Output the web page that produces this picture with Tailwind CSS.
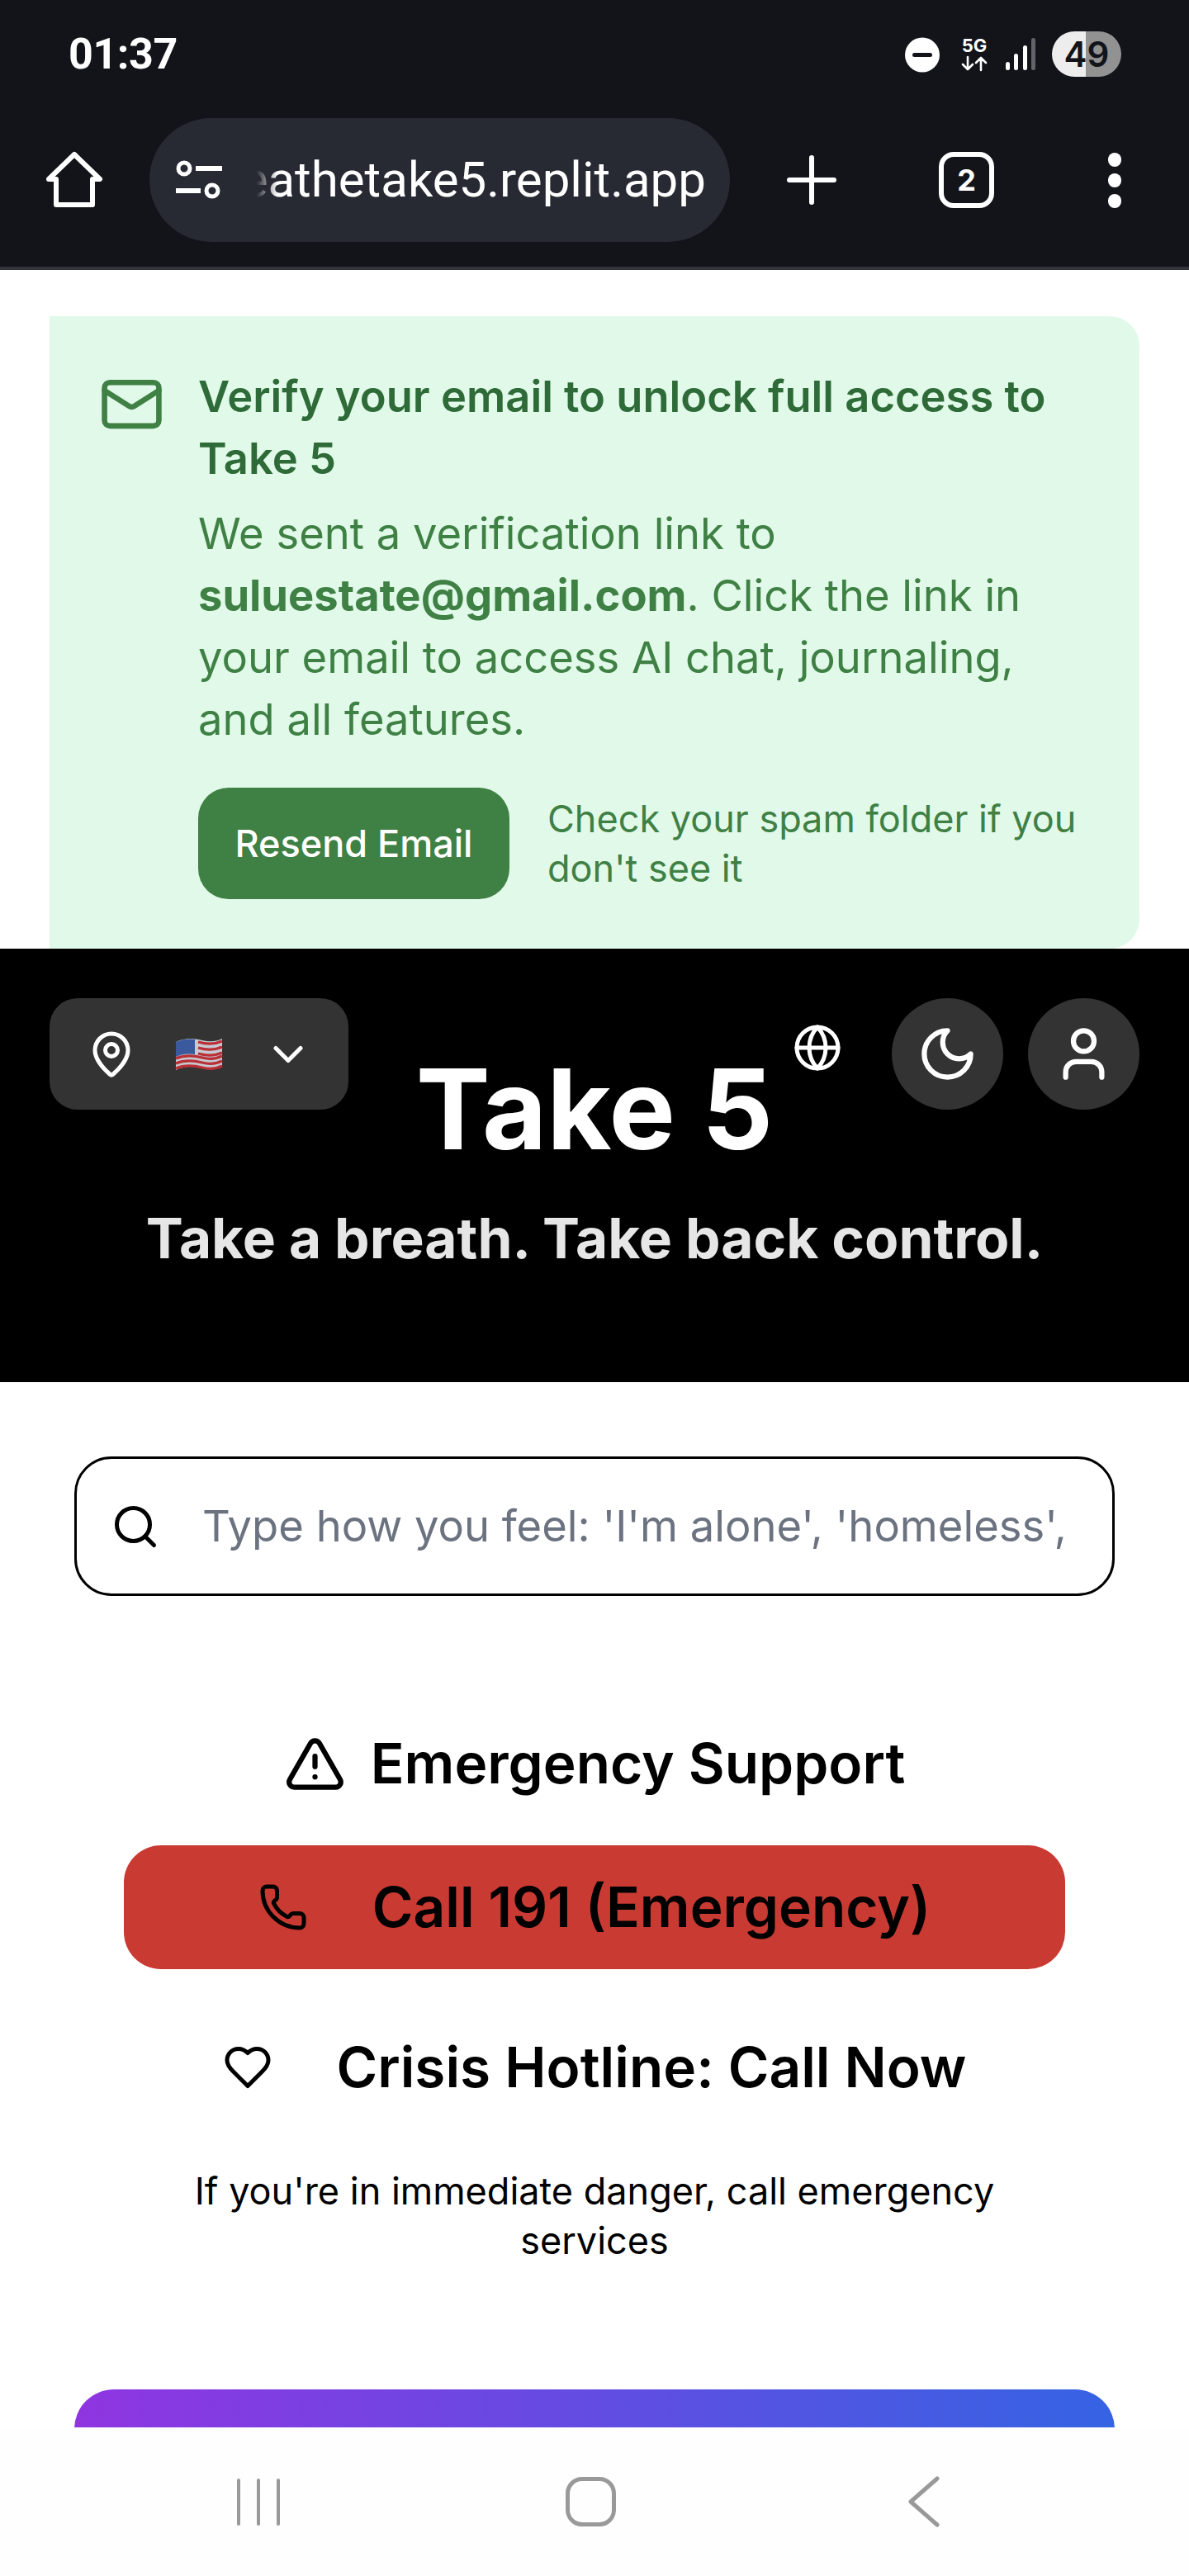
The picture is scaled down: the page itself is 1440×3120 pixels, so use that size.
<!DOCTYPE html>
<html lang="en">
<head>
  <meta charset="UTF-8" />
  <title>Take 5</title>
  <script src="https://cdn.jsdelivr.net/npm/@tailwindcss/browser@4"></script>
</head>
<body class="bg-white font-['Inter',sans-serif]">
<div class="w-[1440px] h-[3120px] flex flex-col overflow-hidden">

  <!-- status bar + browser toolbar -->
  <div class="h-[327px] shrink-0 bg-[#12141a] border-b-4 border-[#33343b] text-white flex flex-col">
    <div class="h-[143px] flex pt-[38px] pl-[83px] pr-[82px] justify-between items-start">
      <span class="font-['Roboto',sans-serif] font-bold text-[52px] leading-[55px] tracking-[-0.4px]">01:37</span>
      <div class="flex items-start">
        <svg class="mt-[7px]" width="42" height="43" viewBox="0 0 42 43"><circle cx="21" cy="21.5" r="21" fill="#fff"/><rect x="9" y="19" width="24" height="5" rx="2.5" fill="#12141a"/></svg>
        <div class="ml-[26px] mt-[6px] w-[32px] flex flex-col items-center">
          <span class="font-bold text-[22px] leading-[22px]">5G</span>
          <svg class="mt-[1px]" width="32" height="20" viewBox="0 0 32 20" fill="none" stroke="#fff" stroke-width="2.6" stroke-linecap="round" stroke-linejoin="round"><path d="M8 2v15M2 11l6 6 6-6M24 18V3M18 9l6-6 6 6"/></svg>
        </div>
        <div class="ml-[22px] mt-[7px] h-[40px] w-[36px] flex items-end justify-between">
          <span class="w-[5px] h-[10px] rounded-full bg-white"></span>
          <span class="w-[5px] h-[20px] rounded-full bg-white"></span>
          <span class="w-[5px] h-[30px] rounded-full bg-white"></span>
          <span class="w-[5px] h-[39px] rounded-full bg-[#63646a]"></span>
        </div>
        <div class="ml-[20px] w-[84px] h-[55px] rounded-full overflow-hidden bg-[linear-gradient(to_right,#ededed_49%,#929292_49%)] flex items-center justify-center text-[#12141a] font-semibold text-[42px] leading-none">49</div>
      </div>
    </div>
    <div class="flex items-start">
      <svg class="ml-[55px] mt-[40px]" width="70" height="69" viewBox="0 0 70 69" fill="none" stroke="#fff" stroke-width="6" stroke-linejoin="round" stroke-linecap="round"><path d="M35 4 66 34H57V65H13V34H4Z"/></svg>
      <div class="relative ml-[56px] w-[703px] h-[150px] rounded-[75px] bg-[#272a33] flex items-center overflow-hidden">
        <svg class="ml-[32px] shrink-0" width="56" height="48" viewBox="0 0 56 48" fill="none" stroke="#fff" stroke-width="5"><circle cx="10" cy="10" r="7"/><circle cx="44" cy="37" r="7"/><path d="M24 10h32M0 37h30" stroke-width="6"/></svg>
        <div class="relative ml-[31px] w-[555px] overflow-hidden flex justify-end">
          <span class="font-['Roboto',sans-serif] text-[60px] leading-[74px] whitespace-nowrap">breathetake5.replit.app</span>
          <span class="absolute left-0 top-0 w-[36px] h-full bg-gradient-to-r from-[#272a33] from-[30%] to-transparent"></span>
        </div>
      </div>
      <svg class="ml-[69px] mt-[45px]" width="60" height="60" viewBox="0 0 60 60" stroke="#fff" stroke-width="6" stroke-linecap="round"><path d="M30 3v54M3 30h54"/></svg>
      <div class="ml-[124px] mt-[41px] w-[67px] h-[68px] rounded-[18px] border-[6px] border-white flex items-center justify-center font-bold text-[36px] leading-none">2</div>
      <div class="ml-[138px] mt-[42px] flex flex-col gap-[8px]">
        <span class="w-[16px] h-[17px] rounded-full bg-white"></span>
        <span class="w-[16px] h-[17px] rounded-full bg-white"></span>
        <span class="w-[16px] h-[17px] rounded-full bg-white"></span>
      </div>
    </div>
  </div>

  <div class="flex-1 min-h-0 overflow-hidden">
    <!-- verify banner -->
    <div class="px-[60px] pt-[56px]">
      <div class="bg-[#e1f9e8] rounded-r-[36px] p-[60px] flex gap-[41px]">
        <svg class="shrink-0 mt-[7px]" width="79" height="79" viewBox="0 0 24 24" fill="none" stroke="#3f8045" stroke-width="2" stroke-linecap="round" stroke-linejoin="round"><rect x="2" y="4" width="20" height="16" rx="2"/><path d="m22 7-8.97 5.7a1.94 1.94 0 0 1-2.06 0L2 7"/></svg>
        <div class="min-w-0 flex-1">
          <h2 class="text-[52.5px] leading-[75px] font-semibold text-[#2e6b38]">Verify your email to unlock full access to Take 5</h2>
          <p class="mt-[16px] text-[52.5px] leading-[75px] text-[#3f8045]">We sent a verification link to <strong class="font-bold">suluestate@gmail.com</strong>. Click the link in your email to access AI chat, journaling, and all features.</p>
          <div class="mt-[45px] flex items-center gap-[46px]">
            <button class="w-[377px] h-[135px] shrink-0 rounded-[37px] bg-[#3f8045] text-white text-[45px] font-medium">Resend Email</button>
            <p class="text-[45px] leading-[60px] text-[#3f8045]">Check your spam folder if you don't see it</p>
          </div>
        </div>
      </div>
    </div>

    <!-- header -->
    <header class="relative h-[525px] bg-black text-center">
      <div class="absolute left-[60px] top-[60px] w-[362px] h-[135px] rounded-[34px] bg-[#333333] flex items-center">
        <svg class="ml-[45px]" width="60" height="60" viewBox="0 0 24 24" fill="none" stroke="#fff" stroke-width="2" stroke-linecap="round" stroke-linejoin="round"><path d="M20 10c0 4.993-5.539 10.193-7.399 11.799a1 1 0 0 1-1.202 0C9.539 20.193 4 14.993 4 10a8 8 0 0 1 16 0"/><circle cx="12" cy="10" r="3"/></svg>
        <svg class="ml-[47px]" width="58" height="42" viewBox="0 0 58 42">
          <path d="M1 6C13 0 25 2 33 4s16 2 24-2v34c-8 4-16 4-24 2S13 34 1 40Z" fill="#c8c8d0"/>
          <g fill="none" stroke="#b92f36" stroke-width="3.2">
            <path d="M28 6c10 3 20 3 29-1"/><path d="M28 13c10 3 20 3 29-1"/><path d="M28 20c10 3 20 3 29-1"/>
            <path d="M1 26c12-5 24-3 32-1s16 2 24-2"/><path d="M1 32c12-5 24-3 32-1s16 2 24-2"/><path d="M1 38c12-5 24-3 32-1s16 2 24-2"/>
          </g>
          <path d="M1 6C9 2 19 2 24 3V21C16 20 9 20 1 24Z" fill="#3b5a9e"/>
        </svg>
        <svg class="ml-[49px]" width="60" height="60" viewBox="0 0 24 24" fill="none" stroke="#fff" stroke-width="2" stroke-linecap="round" stroke-linejoin="round"><path d="m6 9 6 6 6-6"/></svg>
      </div>

      <div class="absolute right-[60px] top-[60px] flex gap-[30px]">
        <button class="w-[135px] h-[135px] rounded-full bg-[#333333] flex items-center justify-center">
          <svg width="75" height="75" viewBox="0 0 24 24" fill="none" stroke="#fff" stroke-width="2" stroke-linecap="round" stroke-linejoin="round"><path d="M12 3a6 6 0 0 0 9 9 9 9 0 1 1-9-9Z"/></svg>
        </button>
        <button class="w-[135px] h-[135px] rounded-full bg-[#333333] flex items-center justify-center">
          <svg width="75" height="75" viewBox="0 0 24 24" fill="none" stroke="#fff" stroke-width="2" stroke-linecap="round" stroke-linejoin="round"><path d="M19 21v-2a4 4 0 0 0-4-4H9a4 4 0 0 0-4 4v2"/><circle cx="12" cy="7" r="4"/></svg>
        </button>
      </div>

      <svg class="absolute left-[960px] top-[90px]" width="60" height="60" viewBox="0 0 24 24" fill="none" stroke="#fff" stroke-width="2" stroke-linecap="round" stroke-linejoin="round"><circle cx="12" cy="12" r="10"/><path d="M12 2a14.5 14.5 0 0 0 0 20 14.5 14.5 0 0 0 0-20"/><path d="M2 12h20"/></svg>

      <h1 class="pt-[114px] text-[135px] leading-[160px] font-bold text-white">Take 5</h1>
      <p class="mt-[32px] text-[67.5px] leading-[90px] font-bold text-white/90">Take a breath. Take back control.</p>
    </header>

    <main class="px-[90px] pt-[90px]">
      <!-- search -->
      <div class="h-[169px] rounded-[45px] border-[3.75px] border-black flex items-center pl-[41px] pr-[53px]">
        <svg class="shrink-0" width="60" height="60" viewBox="0 0 24 24" fill="none" stroke="#000" stroke-width="2" stroke-linecap="round" stroke-linejoin="round"><path d="m21 21-4.34-4.34"/><circle cx="11" cy="11" r="8"/></svg>
        <input class="ml-[51px] flex-1 min-w-0 bg-transparent outline-none text-[52.5px] placeholder:text-[#6b7280]" placeholder="Type how you feel: 'I'm alone', 'homeless', 'scared'" />
      </div>

      <div class="mt-[158px] h-[90px] flex items-center justify-center gap-[30px] text-black">
        <svg width="75" height="75" viewBox="0 0 24 24" fill="none" stroke="#000" stroke-width="2" stroke-linecap="round" stroke-linejoin="round"><path d="m21.73 18-8-14a2 2 0 0 0-3.48 0l-8 14A2 2 0 0 0 4 21h16a2 2 0 0 0 1.73-3"/><path d="M12 9v4"/><path d="M12 17h.01"/></svg>
        <h2 class="text-[67.5px] font-semibold leading-[90px]">Emergency Support</h2>
      </div>

      <button class="mt-[54px] mx-[60px] w-[1140px] h-[150px] rounded-[45px] bg-[#c93a32] flex items-center justify-center gap-[78px] text-black">
        <svg width="60" height="60" viewBox="0 0 24 24" fill="none" stroke="#000" stroke-width="2" stroke-linecap="round" stroke-linejoin="round"><path d="M13.832 16.568a1 1 0 0 0 1.213-.303l.355-.465A2 2 0 0 1 17 15h3a2 2 0 0 1 2 2v3a2 2 0 0 1-2 2A18 18 0 0 1 2 4a2 2 0 0 1 2-2h3a2 2 0 0 1 2 2v3a2 2 0 0 1-.8 1.6l-.468.351a1 1 0 0 0-.292 1.233 14 14 0 0 0 6.392 6.384"/></svg>
        <span class="text-[67.5px] font-semibold leading-[90px]">Call 191 (Emergency)</span>
      </button>

      <div class="mt-[74px] h-[90px] flex items-center justify-center gap-[78px] text-black">
        <svg width="60" height="60" viewBox="0 0 24 24" fill="none" stroke="#000" stroke-width="2" stroke-linecap="round" stroke-linejoin="round"><path d="M19 14c1.49-1.46 3-3.21 3-5.5A5.5 5.5 0 0 0 16.5 3c-1.76 0-3 .5-4.5 2-1.5-1.5-2.74-2-4.5-2A5.5 5.5 0 0 0 2 8.5c0 2.3 1.5 4.05 3 5.5l7 7Z"/></svg>
        <span class="text-[67.5px] font-semibold leading-[90px]">Crisis Hotline: Call Now</span>
      </div>

      <p class="mt-[75px] mx-auto w-[1000px] text-center text-[45px] leading-[60px] text-black">If you're in immediate danger, call emergency services</p>

      <div class="mt-[150px] h-[300px] rounded-[48px] bg-[linear-gradient(to_right,#8f35e0,#3563e3)]"></div>
    </main>
  </div>

  <!-- android nav -->
  <nav class="h-[180px] shrink-0 bg-[#fefefe] flex items-center">
    <div class="ml-[287px] flex gap-[20px]">
      <span class="w-[4px] h-[57px] rounded-full bg-[#999999]"></span>
      <span class="w-[4px] h-[57px] rounded-full bg-[#999999]"></span>
      <span class="w-[4px] h-[57px] rounded-full bg-[#999999]"></span>
    </div>
    <span class="ml-[346px] w-[61px] h-[60px] rounded-[20px] border-[5px] border-[#999999]"></span>
    <svg class="ml-[354px]" width="38" height="62" viewBox="0 0 38 62" fill="none" stroke="#999999" stroke-width="5" stroke-linecap="round" stroke-linejoin="round"><path d="M35 3 3 31l32 28"/></svg>
  </nav>
</div>
</body>
</html>
